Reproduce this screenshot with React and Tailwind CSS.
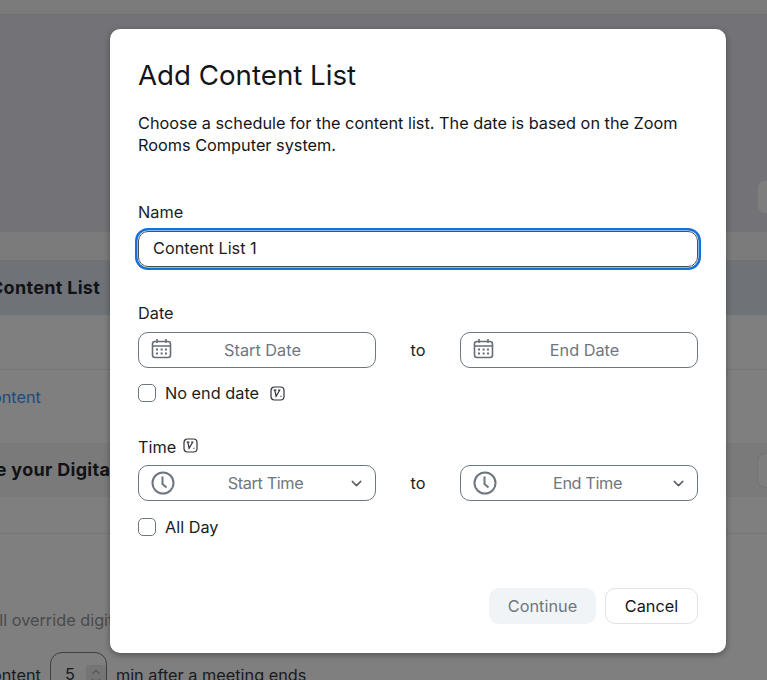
import React from "react";
import { ChevronDown, ChevronUp } from "lucide-react";

const CalendarIcon = () => (
  <svg width="22" height="22" viewBox="0 0 22 22" fill="none" stroke="#666e78" strokeWidth="1.6">
    <rect x="1.5" y="3.5" width="18" height="16" rx="2.5" />
    <path d="M1.5 8h18M6 1v4M15 1v4" />
    <path d="M5 11.5h2M9.6 11.5h2M14 11.5h2M5 15.5h2M9.6 15.5h2M14 15.5h2" strokeWidth="1.8" />
  </svg>
);

const ClockIcon = () => (
  <svg width="24" height="24" viewBox="0 0 24 24" fill="none" stroke="#6e7680" strokeWidth="2">
    <circle cx="12" cy="12" r="10.5" />
    <path d="M11.5 5.5V13l4 3.5" />
  </svg>
);

const BadgeIcon = () => (
  <svg width="15" height="15" viewBox="0 0 15 15" fill="none" stroke="#2f3338" strokeWidth="1.2">
    <rect x="1" y="1" width="13" height="13" rx="3.5" />
    <path d="M3.6 4.2h2.8M4.8 4.2l1.3 6.2 3.6-6.2H8.2M10.4 10.4h1" />
  </svg>
);

const DateField = ({ label }) => (
  <div className="flex h-9 w-[238px] items-center rounded-[10px] border border-[#6e7680] bg-white pl-[12px] pr-3">
    <span className="-mt-[3px]"><CalendarIcon /></span>
    <span className="flex-1 pb-px pr-[11px] text-center text-[#6e7680]">{label}</span>
  </div>
);

const TimeField = ({ label }) => (
  <div className="flex h-9 w-[238px] items-center rounded-[10px] border border-[#6e7680] bg-white pl-[12px] pr-[10px]">
    <ClockIcon />
    <span className="flex-1 pl-[8px] text-center tracking-[-0.4px] text-[#6e7680]">{label}</span>
    <ChevronDown size={17} color="#565c64" />
  </div>
);

const Checkbox = ({ label, badge }) => (
  <label className="flex h-[18px] items-center">
    <span className="h-[18px] w-[18px] rounded-[5px] border border-[#6e7680] bg-white" />
    <span className="ml-[9px] text-[#1a1d21]">{label}</span>
    {badge && <span className="ml-[11px]"><BadgeIcon /></span>}
  </label>
);

const App = () => {
  return (
    <div className="relative h-[680px] w-[767px] overflow-hidden bg-[#7f7f7f] font-['Inter',sans-serif] text-[16.3px] leading-6">
      {/* page behind the dialog */}
      <div className="h-[15px] border-b border-[#6f6f6f] bg-[#7b7b7b]" />
      <div className="flex h-[217px] items-start justify-end bg-[#737276] pt-[165px]">
        <div className="h-[34px] w-[10px] rounded-l-lg border border-r-0 border-[#757575] bg-[#7e7e7e]" />
      </div>
      <div className="h-[28px] bg-[#7b7b7b]" />
      <div className="flex h-[55px] items-center whitespace-nowrap bg-[#6f7377] text-[18px] font-bold tracking-[0.3px] text-[#111216]">
        <span className="-ml-[10px]">Content List</span>
      </div>
      <div className="h-[55px] border-b border-[#767676]" />
      <div className="h-[73px] whitespace-nowrap pt-[15px] text-[#1c4b7e]">
        <span className="-ml-[20px]">Content</span>
      </div>
      <div className="flex h-[54px] items-center justify-between whitespace-nowrap bg-[#7a7a7a] text-[18px] font-bold tracking-[0.3px] text-[#111216]">
        <span className="-ml-[66px]">Manage your Digital</span>
        <div className="h-[35px] w-[10px] rounded-l-lg border border-r-0 border-[#737373] bg-[#7e7e7e]" />
      </div>
      <div className="h-[37px] border-b border-[#767676]" />
      <div className="h-[146px] pt-[74px]">
        <p className="-ml-[12px] whitespace-nowrap text-[#4a4a4c]">All override digital signage</p>
        <div className="mt-[20px] flex h-[36px] items-center whitespace-nowrap text-[#1a1a1c]">
          <span className="-ml-[20px] pt-[10px]">Content</span>
          <div className="ml-[9px] flex h-[36px] w-[57px] shrink-0 items-start rounded-t-xl border border-[#3f3f3f] pl-[14px] pt-[9px]">
            <span>5</span>
            <span className="ml-[11px] mt-[3px] flex h-[24px] w-[20px] flex-col items-center bg-[#757575] text-[#5a5a5a]">
              <ChevronUp size={14} />
              <ChevronDown size={14} className="-mt-[5px]" />
            </span>
          </div>
          <span className="ml-[9px] pt-[10px]">min after a meeting ends</span>
        </div>
      </div>

      {/* dialog */}
      <div className="absolute left-[110px] top-[29px] flex h-[624px] w-[616px] flex-col rounded-[10px] bg-white px-7 pb-[29px] pt-[28px] text-[#1a1d21] shadow-[0_2px_6px_rgba(0,0,0,0.35)]">
        <h2 className="text-[27.7px] font-normal leading-9 text-[#131619]">Add Content List</h2>
        <p className="mt-[19px] leading-[22px] text-[#131619]">
          Choose a schedule for the content list. The date is based on the Zoom Rooms Computer system.
        </p>

        <div className="mt-[44px] leading-6">Name</div>
        <div className="mt-[7px] flex h-9 items-center rounded-[10px] border border-[#4a5058] bg-white px-[14px] pb-[2px] shadow-[0_0_0_0.5px_#fff,0_0_0_3px_#1a6fd4]">
          Content List 1
        </div>

        <div className="mt-[34px] leading-6">Date</div>
        <div className="mt-[7px] flex items-center justify-between">
          <DateField label="Start Date" />
          <span>to</span>
          <DateField label="End Date" />
        </div>
        <div className="mt-[16px]"><Checkbox label="No end date" badge /></div>

        <div className="mt-[33px] flex items-center leading-6">
          Time
          <span className="ml-[7px] -mt-[3px]"><BadgeIcon /></span>
        </div>
        <div className="mt-[6px] flex items-center justify-between">
          <TimeField label="Start Time" />
          <span>to</span>
          <TimeField label="End Time" />
        </div>
        <div className="mt-[17px]"><Checkbox label="All Day" /></div>

        <div className="mt-auto flex justify-end gap-[9px]">
          <button className="h-9 w-[107px] rounded-[10px] bg-[#f1f4f6] text-[#6e7680]">Continue</button>
          <button className="h-9 w-[93px] rounded-[10px] border border-[#dfe3e8] bg-white text-[#131619]">Cancel</button>
        </div>
      </div>
    </div>
  );
};

export default App;
